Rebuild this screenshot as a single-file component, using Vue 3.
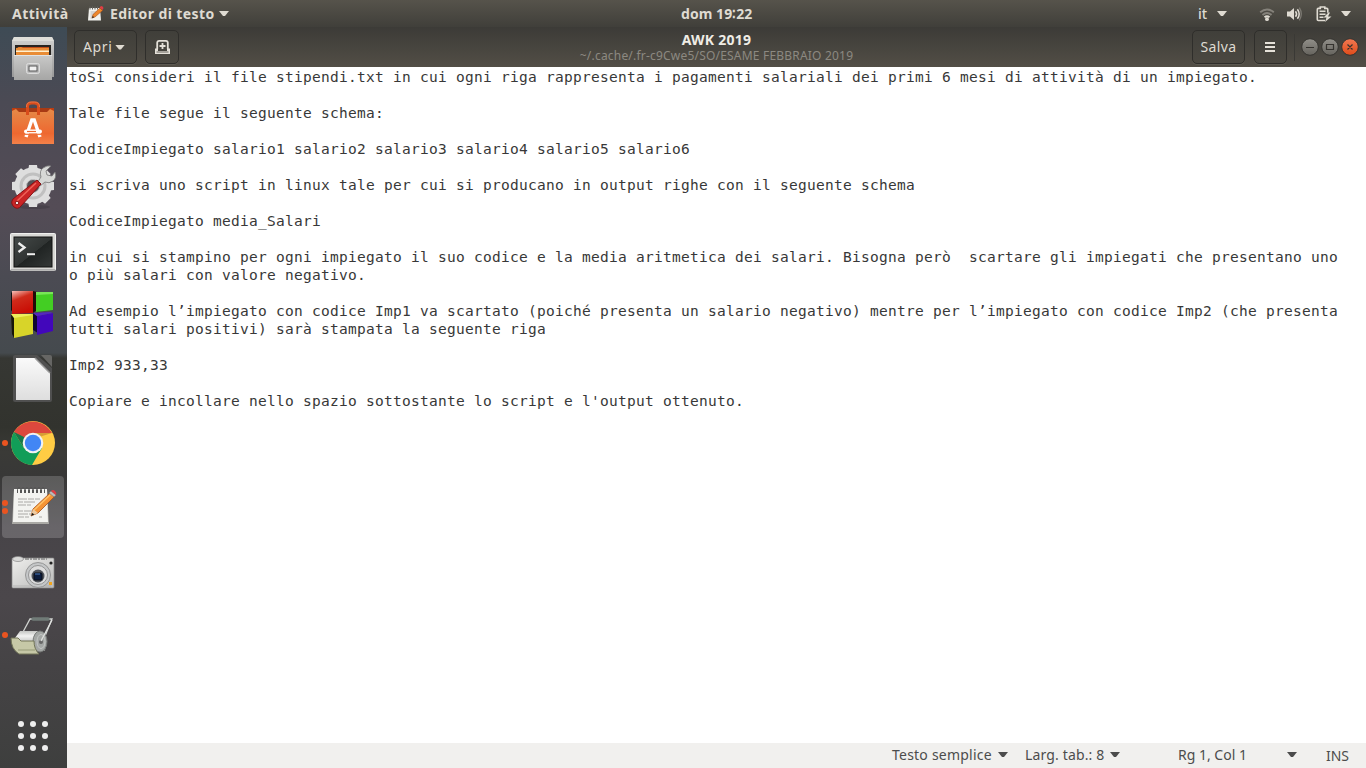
<script setup>
const lines = [
  'toSi consideri il file stipendi.txt in cui ogni riga rappresenta i pagamenti salariali dei primi 6 mesi di attività di un impiegato.',
  '',
  'Tale file segue il seguente schema:',
  '',
  'CodiceImpiegato salario1 salario2 salario3 salario4 salario5 salario6',
  '',
  'si scriva uno script in linux tale per cui si producano in output righe con il seguente schema',
  '',
  'CodiceImpiegato media_Salari',
  '',
  'in cui si stampino per ogni impiegato il suo codice e la media aritmetica dei salari. Bisogna però  scartare gli impiegati che presentano uno',
  'o più salari con valore negativo.',
  '',
  'Ad esempio l’impiegato con codice Imp1 va scartato (poiché presenta un salario negativo) mentre per l’impiegato con codice Imp2 (che presenta',
  'tutti salari positivi) sarà stampata la seguente riga',
  '',
  'Imp2 933,33',
  '',
  "Copiare e incollare nello spazio sottostante lo script e l'output ottenuto.",
]
const teeth = [0, 45, 90, 135, 180, 225, 270, 315]
const rings = [0, 1, 2, 3, 4, 5, 6]
const textRows = [
  'M9 13h9m1 0h6m1 0h5', 'M9 16h5m1 0h11', 'M9 19h8m1 0h4', 'M9 25h5m1 0h8',
  'M9 28h10m1 0h3', 'M9 31h6m1 0h4m10 0h3',
]
</script>

<template>
  <div class="desktop">
    <header class="topbar">
      <div class="top-left">
        <span class="t activities">Attività</span>
        <svg class="mini" width="17" height="17" viewBox="0 0 17 17">
          <path d="M2 3h11l1 12.500H1z" fill="#f2f2ee" />
          <path d="M3 1.500v3M5.500 1.500v3M8 1.500v3M10.500 1.500v3" stroke="#66645e" stroke-width="1" />
          <path d="M3.500 7h6M3.500 9h4M3.500 11h3M3.500 13h2" stroke="#aaa" stroke-width=".8" />
          <path d="M5 13l1-3.500 7-6.500 2.500 2.500L8 12z" fill="#ee872b" stroke="#a34b16" stroke-width=".6" />
          <path d="M12.500 2.500l1.500-1.500q2 0 2.500 2L15.500 5z" fill="#e33d45" />
          <path d="M5 13l.8-2 1.400 1.200z" fill="#222" />
        </svg>
        <span class="t app-name">Editor di testo</span>
        <i class="arrow"></i>
      </div>
      <span class="t clock">dom 19∶22</span>
      <div class="top-right">
        <span class="t lang">it</span>
        <i class="arrow lang-arrow"></i>
        <svg width="80" height="20" viewBox="0 0 80 20">
          <g fill="none" stroke-width="1.900">
            <path d="M1.200 8.300Q8 2.500 14.800 8.300" stroke="#85827b" />
            <path d="M3.500 11Q8 7.200 12.500 11" stroke="#85827b" />
            <path d="M5.500 13.200Q8 11.200 10.500 13.200" stroke="#dfdbd2" />
          </g>
          <circle cx="8" cy="15.200" r="1.900" fill="#dfdbd2" />
          <path d="M28 7.500h3l4-3.500v12l-4-3.500h-3z" fill="#dfdbd2" />
          <path d="M36.500 7.200q2.200 2.800 0 5.600" fill="none" stroke="#dfdbd2" stroke-width="1.500" />
          <path d="M38.400 5.200q3.600 4.800 0 9.600" fill="none" stroke="#dfdbd2" stroke-width="1.500" />
          <path d="M40.300 3.700q4 6.300 0 12.600" fill="none" stroke="#7c7972" stroke-width="1.300" />
          <path d="M66 16.500h-6.700q-1 0-1-1V5.400q0-1 1-1h2V3h4.500v1.400h2q1 0 1 1v3.400" fill="none" stroke="#dfdbd2" stroke-width="1.600" />
          <path d="M60.500 7.300h6M60.500 10.200h6M60.500 13.200h4" stroke="#dfdbd2" stroke-width="1.500" />
          <path d="M69.500 8.500l-5 5h3l-1.500 4.500 6.500-5.500h-3.500l2-4z" fill="#dfdbd2" />
        </svg>
        <i class="arrow power-arrow"></i>
      </div>
    </header>

    <div class="workspace">
      <nav class="dock">
        <div class="slot">
          <svg width="46" height="46" viewBox="0 0 46 46">
            <defs>
              <linearGradient id="metal" x2="0" y2="1"><stop stop-color="#d2d2d0" /><stop offset="1" stop-color="#999" /></linearGradient>
              <linearGradient id="front" x2="0" y2="1"><stop stop-color="#c9c9c8" /><stop offset="1" stop-color="#a6a6a5" /></linearGradient>
            </defs>
            <path d="M4 1h38l2 4v36H2V5z" fill="url(#metal)" />
            <path d="M4 1h38l2 4H2z" fill="#deded9" />
            <rect x="5" y="9" width="36" height="12" fill="#282420" />
            <path d="M8 11h31v7H8z" fill="#c34d16" />
            <path d="M6 12l5-1 2 1h26v7H6z" fill="#e98c35" />
            <path d="M6 14.500h33v1.500H6z" fill="#fff0ce" />
            <path d="M4 19h38v25H4z" fill="url(#front)" />
            <path d="M4 19.500h38" stroke="#e2e2e2" />
            <rect x="16.500" y="27.500" width="13" height="10" rx="2" fill="#bcbcbc" stroke="#dedede" />
            <rect x="19" y="30" width="8" height="5" fill="#f1f1f1" stroke="#555" />
          </svg>
        </div>
        <div class="slot down">
          <svg width="46" height="46" viewBox="0 0 46 46">
            <defs><linearGradient id="bag" x2="0" y2="1"><stop stop-color="#e68a48" /><stop offset=".7" stop-color="#ee6830" /><stop offset="1" stop-color="#f38149" /></linearGradient></defs>
            <path d="M2 7h7l2 4H2zM44 7h-7l-2 4h9z" fill="#bd3d12" />
            <path d="M6 7h34v5H6z" fill="#a83a14" />
            <path d="M2 10l4-2 3 3h28l3-3 4 2v33H2z" fill="url(#bag)" />
            <path d="M17.500 14V5q0-3 4-3h3q4 0 4 3v9" fill="none" stroke="#d94c1b" stroke-width="3" />
            <path d="M16.500 6q0-5 5-5h3q5 0 5 5" fill="none" stroke="#f28a5c" stroke-width=".7" />
            <path d="M16 36l5.800-17h2.400L30 36" fill="none" stroke="#fff" stroke-width="3.400" />
            <rect x="14" y="28.500" width="18" height="4" rx="2" fill="#fff" />
            <path d="M17 30.500h9" stroke="#ed692f" stroke-width="1.200" />
            <path d="M13 33.300h20" stroke="#ef6f37" stroke-width="1.200" />
          </svg>
        </div>
        <div class="slot">
          <svg width="48" height="48" viewBox="0 0 48 48">
            <ellipse cx="25" cy="44" rx="16" ry="2" fill="#302c31" opacity=".3" />
            <g fill="#dedede">
              <path v-for="a in teeth" :key="a" :transform="`rotate(${a} 24 23)`" d="M19 9l1-7h8l1 7z" />
            </g>
            <circle cx="24" cy="23" r="12.500" fill="none" stroke="#dedede" stroke-width="12" />
            <circle cx="24" cy="23" r="12" fill="none" stroke="#c0c0c0" stroke-width="3" />
            <circle cx="24" cy="23" r="6.500" fill="#555156" stroke="#c5c5c5" />
            <path d="M28 20l4-6q-2-6 2-9 4-3 8-2l-5 5 1 4 5 1 3-4q2 6-2 9-4 3-8 1l-5 4z" fill="#d7d8d6" stroke="#777" stroke-width=".8" />
            <path d="M28 17l4 4-20 22q-3 4-7 1-4-4-1-8z" fill="#ca2526" stroke="#861215" />
            <path d="M27 20L8 38" stroke="#ef6359" stroke-width="1.500" />
            <circle cx="8" cy="40" r="1.800" fill="#efefef" stroke="#811" />
          </svg>
        </div>
        <div class="slot down">
          <svg width="46" height="40" viewBox="0 0 46 40">
            <defs><linearGradient id="screen" x2="1" y2="1"><stop stop-color="#444948" /><stop offset=".52" stop-color="#303433" /><stop offset=".53" stop-color="#202423" /><stop offset="1" stop-color="#343837" /></linearGradient></defs>
            <rect x=".5" y="1.500" width="45" height="37" rx="1" fill="#d8d8d5" stroke="#f0f0ef" />
            <path d="M1 38h44" stroke="#858585" />
            <rect x="4" y="5" width="38" height="30" fill="url(#screen)" stroke="#111" />
            <path d="M8.500 11l6 4.500-6 4.500" fill="none" stroke="#eee" stroke-width="2.300" />
            <path d="M17 22.200h8" stroke="#eee" stroke-width="2" />
          </svg>
        </div>
        <div class="slot">
          <svg width="48" height="52" viewBox="0 0 48 52">
            <defs>
              <linearGradient id="red" x2=".35" y2="1"><stop stop-color="#f7c2ba" /><stop offset=".4" stop-color="#cf2b1b" /><stop offset="1" stop-color="#c90e05" /></linearGradient>
            </defs>
            <path d="M2 4l2-2v22l-2-3z" fill="#111" />
            <path d="M3 2h21v22L3 25z" fill="url(#red)" />
            <path d="M24 2l4 1v18l-4 3z" fill="#210b08" />
            <path d="M27 3l17 0v18l-17 2z" fill="#43ce23" />
            <path d="M27 3h17v2L27 6z" fill="#78e557" />
            <path d="M2 25l3 4v20l-2-4z" fill="#171607" />
            <path d="M5 28l19-3v20L5 49z" fill="#d8d429" />
            <path d="M2 25h20l2 1-19 3z" fill="#eeee5c" />
            <path d="M24 24l5 4v16l-5-3z" fill="#110630" />
            <path d="M28 27l16-3v18l-16 4z" fill="#4207bb" />
            <path d="M24 24l17-1 3 1-16 3z" fill="#5427bf" />
          </svg>
        </div>
        <div class="slot">
          <svg width="44" height="50" viewBox="0 0 44 50">
            <defs><linearGradient id="sheet" x2="0" y2="1"><stop stop-color="#fafafa" /><stop offset="1" stop-color="#dedede" /></linearGradient></defs>
            <path d="M4 1h22L41 14v32q0 2-2 2H4q-2 0-2-2V3q0-2 2-2z" fill="#505050" />
            <path d="M30 1h9q2 0 2 2v10z" fill="#666664" />
            <path d="M5 4h19L39 19V46H5z" fill="url(#sheet)" />
            <path d="M24 4L39 19" stroke="#999" stroke-width="1.500" />
          </svg>
        </div>
        <div class="slot">
          <i class="dot one"></i>
          <svg width="46" height="46" viewBox="0 0 46 46">
            <circle cx="23" cy="23" r="22" fill="#fc4" />
            <path d="M4 12A22 22 0 0 1 42 13H23L15 29z" fill="#dd483d" />
            <path d="M4 12A22 22 0 0 0 22 45L32 28H14z" fill="#119d58" />
            <path d="M14 28L4 12l10 5z" fill="#157a49" />
            <path d="M23 13h19l-13 4z" fill="#d79d36" />
            <circle cx="23" cy="23" r="10.300" fill="#f2f2f2" />
            <circle cx="23" cy="23" r="8.200" fill="#4286f5" />
          </svg>
        </div>
        <div class="slot active">
          <i class="dot upper"></i><i class="dot lower"></i>
          <svg width="48" height="42" viewBox="0 0 48 42">
            <path d="M5 4h33l2 34H3z" fill="#aaa9a5" />
            <path d="M5 3h33l1 33H4z" fill="#f3f3f0" />
            <path v-for="n in rings" :key="n" :transform="`translate(${n * 4} -1)`" d="M8.500 8V4.500q0-2 1.500-2t1.500 2V8" fill="none" stroke="#555" stroke-width="1" />
            <path v-for="row in textRows" :key="row" :d="row" stroke="#aaa9a6" stroke-width="1" />
            <path d="M22 30l2-7 17-16 4 4-16 16z" fill="#f59435" stroke="#a74e16" stroke-width=".8" />
            <path d="M25 24L41 9" stroke="#ffc369" stroke-width="1.600" />
            <path d="M40 7l2-2 5 4-2 2z" fill="#bbb" stroke="#777" stroke-width=".5" />
            <path d="M42 5q2-2 4 0 2 2 1 4z" fill="#e33d43" />
            <path d="M22 30l2-7 5 4z" fill="#edcaa0" /><path d="M22 30l1.300-3 2 1.500z" fill="#111" />
          </svg>
        </div>
        <div class="slot camera">
          <svg width="46" height="40" viewBox="0 0 46 40">
            <defs><linearGradient id="body" x2="1" y2="1"><stop stop-color="#efefed" /><stop offset="1" stop-color="#b9b9b8" /></linearGradient></defs>
            <rect x="2" y="5" width="42" height="30" rx="1" fill="url(#body)" stroke="#888" stroke-width=".7" />
            <path d="M15 6h22" stroke="#888" stroke-width="1.500" stroke-dasharray="4 1 2 1" />
            <ellipse cx="8" cy="6" rx="5.500" ry="2.500" fill="#d8d8d7" stroke="#888" stroke-width=".7" />
            <path d="M3 33h38" stroke="#aaa" stroke-width=".7" />
            <circle cx="28" cy="22" r="12.500" fill="#c5c7c8" stroke="#888" stroke-width=".8" />
            <circle cx="28" cy="22" r="9.500" fill="#ddd" stroke="#858585" stroke-width=".8" />
            <circle cx="28" cy="23" r="6.500" fill="#50545b" />
            <rect x="24" y="20" width="8" height="7" rx="1" fill="#0c1d3e" stroke="#080c17" />
            <path d="M25 21h5" stroke="#4778bd" />
            <circle cx="41" cy="10" r="1.600" fill="#222" /><rect x="39" y="29" width="3" height="3" fill="#f2a51d" />
          </svg>
        </div>
        <div class="slot">
          <i class="dot one"></i>
          <svg width="48" height="42" viewBox="0 0 48 42">
            <defs><linearGradient id="roll" x2="0" y2="1"><stop stop-color="#c4c5c3" /><stop offset=".25" stop-color="#f2f2f1" /><stop offset="1" stop-color="#858684" /></linearGradient></defs>
            <path d="M14 18L21 5h22L34 27" fill="none" stroke="#d0d3d0" stroke-width="1.300" />
            <path d="M24 5h15" stroke="#707b77" stroke-width="3.400" stroke-linecap="round" />
            <path d="M11 17h20q8 5 5 20H11q-7-5-5-13z" fill="url(#roll)" />
            <ellipse cx="31" cy="27.500" rx="7" ry="10.500" fill="#a4a7a5" stroke="#777a78" />
            <ellipse cx="32" cy="27.500" rx="4" ry="7" fill="none" stroke="#c4c7c5" />
            <circle cx="32" cy="28" r="2" fill="#666" />
            <path d="M32 27l11-21" stroke="#dfe1df" stroke-width="1.300" />
            <path d="M2 24h7l3 3h13q0 8 5 13H10Q2 35 2 24z" fill="#c6c8a7" stroke="#727559" />
            <path d="M9 36h17" stroke="#aeb18f" stroke-width="2" />
          </svg>
        </div>
        <div class="launcher"><i v-for="n in 9" :key="n"></i></div>
      </nav>

      <main class="editor">
        <div class="toolbar">
          <div class="group">
            <button class="btn open"><span class="t apri">Apri</span><i class="arrow"></i></button>
            <button class="btn new-doc">
              <svg width="17" height="16" viewBox="0 0 17 16"><path d="M3.200 10V3.800q0-2 2-2h6.600q2 0 2 2V10" fill="none" stroke="#e4e0d8" stroke-width="1.800" /><path d="M8.500 4v6M5.500 7h6" stroke="#e4e0d8" stroke-width="1.800" /><path d="M1 9.500h3v2.500h9V9.500h3V15H1z" fill="#e4e0d8" /><path d="M2.500 13h12" stroke="#45433e" stroke-width=".8" /></svg>
            </button>
          </div>
          <div class="heading">
            <span class="t title">AWK 2019</span>
            <span class="t path">~/.cache/.fr-c9Cwe5/SO/ESAME FEBBRAIO 2019</span>
          </div>
          <div class="group end">
            <button class="btn save"><span class="t salva">Salva</span></button>
            <button class="btn menu"><i></i><i></i><i></i></button>
            <span class="divider"></span>
            <svg class="controls" width="58" height="18" viewBox="0 0 58 18">
              <defs>
                <linearGradient id="gray" x2="0" y2="1"><stop stop-color="#92908a" /><stop offset="1" stop-color="#65635d" /></linearGradient>
                <linearGradient id="orange" x2="0" y2="1"><stop stop-color="#f27953" /><stop offset="1" stop-color="#df4b19" /></linearGradient>
              </defs>
              <g stroke="#353430" stroke-width="1"><circle cx="9" cy="9" r="8.300" fill="url(#gray)" /><circle cx="29" cy="9" r="8.300" fill="url(#gray)" /><circle cx="49" cy="9" r="8.300" fill="url(#orange)" /></g>
              <path d="M5 9.500h8M25.500 6.500h7v5h-7zM46.500 6.500l5 5m0-5l-5 5" fill="none" stroke="#35332f" stroke-width="1.200" />
            </svg>
          </div>
        </div>
        <div class="document"><div v-for="(line, i) in lines" :key="i" class="line">{{ line }}</div></div>
        <footer class="status">
          <span class="t plain">Testo semplice</span><i class="arrow a1"></i>
          <span class="t tabs">Larg. tab.: 8</span><i class="arrow a2"></i>
          <span class="t position">Rg 1, Col 1</span><i class="arrow a3"></i>
          <span class="t ins">INS</span>
        </footer>
      </main>
    </div>
  </div>
</template>

<style>
html, body { margin: 0; overflow: hidden; }
</style>

<style scoped>
* { box-sizing: border-box; }
svg { display: block; flex: none; }
.desktop { width: 1366px; height: 768px; overflow: hidden; font-family: "Noto Sans", "Open Sans", sans-serif; font-size: 14px; }
.t { display: block; flex: none; white-space: nowrap; }
.arrow { display: block; flex: none; width: 10px; height: 5px; background: currentColor; clip-path: polygon(0 0, 100% 0, 60% 100%, 40% 100%); }
.topbar { height: 27px; display: grid; grid-template-columns: 681px 72px 1fr; color: #dfdbd2; background: linear-gradient(#56534b, #403f3a); font-weight: 700; align-items: center; line-height: 27px; }
.top-left { display: flex; align-items: center; padding-left: 12px; }
.activities { width: 56px; letter-spacing: .5px; }
.mini { margin: 0 6px 1px 19px; }
.app-name { width: 105px; margin-right: 4px; letter-spacing: .4px; }
.clock { line-height: 25px; letter-spacing: .05px; }
.top-right { display: flex; align-items: center; justify-content: flex-end; padding-right: 15px; }
.top-right svg { margin-left: -1px; }
.lang { width: 10px; font-weight: 500; }
.lang-arrow { margin: 0 33px 0 9px; }
.power-arrow { margin-left: 2px; }
.workspace { display: flex; height: 741px; }
.dock { width: 67px; flex: none; display: flex; flex-direction: column; background: linear-gradient(#3e4b55 0, #4b4a54 75px, #544c56 180px, #4b4b53 250px, #454a4e 326px, #363733 331px, #32332e 400px, #3a3a37 425px, #383837 448px, #474448 500px, #4b474b 570px, #454345 640px, #3e3f3e 741px); }
.slot { height: 64px; width: 66px; flex: none; position: relative; display: flex; align-items: center; justify-content: center; }
.down { padding-top: 2px; }
.camera { padding-top: 3px; }
.active::before { content: ""; position: absolute; inset: 1px 2px; border-radius: 4px; background: #ffffff2e; }
.slot svg { position: relative; }
.dot { position: absolute; left: 2px; width: 6px; height: 6px; border-radius: 50%; background: #e95420; z-index: 1; }
.one { top: 29px; } .upper { top: 25px; } .lower { top: 33px; }
.launcher { margin: 54px 0 0 18px; display: grid; grid-template-columns: repeat(3, 6px); gap: 6px; }
.launcher i { height: 6px; border-radius: 50%; background: #eee; }
.editor { flex: 1; min-width: 0; display: flex; flex-direction: column; background: #fff; }
.toolbar { height: 40px; flex: none; display: grid; grid-template-columns: 1fr auto 1fr; align-items: center; background: linear-gradient(#3c3b37, #524e46); color: #dfdbd2; }
.group { display: flex; align-items: center; padding-left: 7px; }
.end { justify-content: flex-end; padding: 0 7px 0 0; }
.btn { height: 34px; padding: 0; border: 1px solid #2f2e2b; border-radius: 5px; background: linear-gradient(#403f3a, #4b4841); color: #dfdbd2; display: flex; align-items: center; justify-content: center; font: inherit; box-shadow: 0 1px #5c5951; }
.open { width: 63px; gap: 2px; justify-content: flex-start; padding-left: 8px; } .new-doc { width: 34px; margin-left: 8px; }
.apri { width: 30px; text-align: left; letter-spacing: .6px; padding-bottom: 1px; }
.salva { letter-spacing: .4px; padding-bottom: 1px; }
.heading { display: flex; flex-direction: column; align-items: center; height: 40px; }
.title { font-weight: 700; line-height: 17px; margin-top: 4px; letter-spacing: .25px; color: #efece5; }
.path { font-size: 12px; line-height: 16px; letter-spacing: .2px; color: #8c8981; }
.save { width: 53px; } .menu { width: 33px; margin-left: 9px; flex-direction: column; gap: 2px; padding: 0 2px 1px 0; }
.menu i { width: 10px; height: 2px; background: #e5e1d9; }
.divider { width: 1px; height: 27px; margin: 0 6px 0 7px; background: #3a3935; }
.document { flex: 1; padding: 1px 0 0 2px; color: #383838; font-family: "DejaVu Sans Mono", monospace; font-size: 14.5px; letter-spacing: .27px; }
.line { height: 18px; line-height: 18px; white-space: pre; }
.status { height: 25px; flex: none; display: flex; align-items: center; padding: 0 17px 2px 825px; background: #f1f0ee; color: #4c4c4c; }
.plain { width: 100px; letter-spacing: .22px; }
.tabs { width: 80px; margin-left: 17px; letter-spacing: .15px; }
.position { width: 68px; margin-left: 58px; }
.status .t { margin-top: -1px; }
.a1 { margin-left: 6px; } .a2 { margin-left: 5px; } .a3 { margin-left: 41px; }
.status .ins { margin-left: auto; margin-top: 1px; }
</style>
